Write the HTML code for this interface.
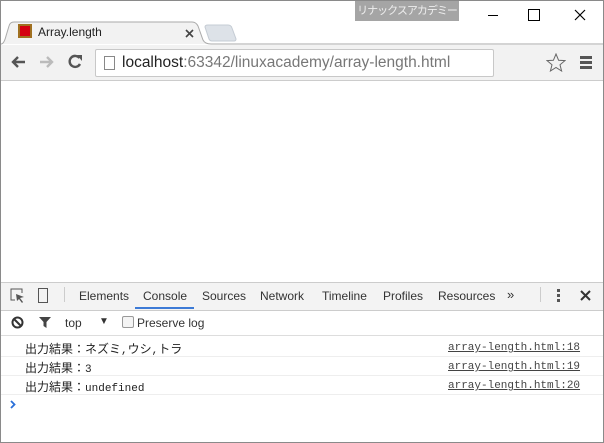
<!DOCTYPE html><html><head><style>
body{margin:0;width:604px;height:443px;overflow:hidden;background:#fff;font-family:"Liberation Sans","Noto Sans CJK JP",sans-serif;position:relative}
.a{position:absolute;white-space:nowrap}
</style></head><body>
<div class="a" style="left:0;top:0;width:602px;height:441px;border:1px solid #8a8a8a;"></div>
<div class="a" style="left:355px;top:1px;width:104px;height:20px;background:#a5a5a5;color:#eee;font-size:11px;line-height:20px;text-align:center;letter-spacing:-1px">リナックスアカデミー</div>
<div class="a" style="left:488px;top:15px;width:10px;height:1px;background:#000"></div>
<div class="a" style="left:528px;top:9px;width:10px;height:10px;border:1px solid #000"></div>
<svg class="a" style="left:574px;top:9px" width="12" height="12"><path d="M1 1L11 11M11 1L1 11" stroke="#000" stroke-width="1.2"/></svg>
<svg class="a" style="left:0;top:20px" width="604" height="26"><path d="M1 24 Q4 24 6 16 L9 6 Q10 2 14 2 L192 2 Q196 2 198 6 L203 20 Q205 24 211 24 L603 24" fill="#f2f2f2" stroke="#aaa"/><path d="M205 7 Q205 5 208 5 L228 5 Q231 5 232 8 L236 19 Q236 21 234 21 L212 21 Q210 21 209 19 Z" fill="#dde2e8" stroke="#c5ccd4"/></svg>
<div class="a" style="left:18px;top:24px;width:14px;height:14px;background:#d40010;border:2px solid #a07020;box-sizing:border-box"></div>
<div class="a" style="left:38px;top:25px;font-size:12px;color:#222">Array.length</div>
<svg class="a" style="left:185px;top:29px" width="9" height="9"><path d="M1 1L8 8M8 1L1 8" stroke="#444" stroke-width="1.6"/></svg>
<div class="a" style="left:1px;top:45px;width:602px;height:35px;background:#f2f2f2;border-bottom:1px solid #ccc"></div>
<svg class="a" style="left:10px;top:55px" width="16" height="14"><path d="M15 7H3M8 2L3 7L8 12" stroke="#555" stroke-width="2.4" fill="none"/></svg>
<svg class="a" style="left:39px;top:55px" width="16" height="14"><path d="M1 7H13M8 2L13 7L8 12" stroke="#bbb" stroke-width="2.4" fill="none"/></svg>
<svg class="a" style="left:68px;top:54px" width="16" height="16"><path d="M12 10A5.5 5.5 0 1 1 11.5 4" stroke="#555" stroke-width="2.4" fill="none"/><path d="M9 1L14 1L14 7Z" fill="#555"/></svg>
<div class="a" style="left:95px;top:49px;width:397px;height:26px;background:#fff;border:1px solid #c8c8c8;border-radius:2px"></div>
<div class="a" style="left:104px;top:56px;width:9px;height:12px;border:1px solid #888"></div>
<div class="a" style="left:122px;top:54px;font-size:15.5px;color:#777"><span style="color:#222">localhost</span>:63342/linuxacademy/array-length.html</div>
<svg class="a" style="left:546px;top:53px" width="20" height="19"><path d="M10 1L12.6 7.3L19 7.6L14 11.8L15.6 18L10 14.5L4.4 18L6 11.8L1 7.6L7.4 7.3Z" fill="none" stroke="#666"/></svg>
<div class="a" style="left:580px;top:56px;width:12px;height:3px;background:#555;box-shadow:0 5px #555,0 10px #555"></div>
<div class="a" style="left:1px;top:282px;width:602px;height:27px;background:#f3f3f3;border-top:1px solid #ccc;border-bottom:1px solid #ccc"></div>
<svg class="a" style="left:10px;top:288px" width="16" height="16"><path d="M5 12H1V1H12V5" stroke="#555" fill="none"/><path d="M6 6L14 9L10 10L13 14L12 15L9 11L7 13Z" fill="#555"/></svg>
<div class="a" style="left:38px;top:288px;width:8px;height:13px;border:1.5px solid #555"></div>
<div class="a" style="left:64px;top:287px;width:1px;height:15px;background:#ccc"></div>
<div class="a" style="left:79px;top:289px;font-size:12px;color:#333">Elements</div>
<div class="a" style="left:143px;top:289px;font-size:12px;color:#333">Console</div>
<div class="a" style="left:135px;top:307px;width:59px;height:2px;background:#3c7ad6"></div>
<div class="a" style="left:202px;top:289px;font-size:12px;color:#333">Sources</div>
<div class="a" style="left:260px;top:289px;font-size:12px;color:#333">Network</div>
<div class="a" style="left:322px;top:289px;font-size:12px;color:#333">Timeline</div>
<div class="a" style="left:383px;top:289px;font-size:12px;color:#333">Profiles</div>
<div class="a" style="left:438px;top:289px;font-size:12px;color:#333">Resources</div>
<div class="a" style="left:507px;top:287px;font-size:13px;color:#333">»</div>
<div class="a" style="left:540px;top:287px;width:1px;height:15px;background:#ccc"></div>
<div class="a" style="left:557px;top:289px;width:3px;height:3px;background:#555;box-shadow:0 5px #555,0 10px #555"></div>
<svg class="a" style="left:580px;top:290px" width="11" height="11"><path d="M1 1L10 10M10 1L1 10" stroke="#333" stroke-width="2"/></svg>
<div class="a" style="left:1px;top:310px;width:602px;height:25px;border-bottom:1px solid #ddd"></div>
<svg class="a" style="left:11px;top:316px" width="13" height="13"><circle cx="6.5" cy="6.5" r="5" stroke="#333" stroke-width="2" fill="none"/><path d="M3 3L10 10" stroke="#333" stroke-width="2"/></svg>
<svg class="a" style="left:38px;top:316px" width="14" height="13"><path d="M1 1H13L8.5 6V12L5.5 10V6Z" fill="#444"/></svg>
<div class="a" style="left:65px;top:316px;font-size:12px;color:#333">top</div>
<div class="a" style="left:99px;top:316px;font-size:10px;color:#333">▼</div>
<div class="a" style="left:122px;top:316px;width:10px;height:10px;border:1px solid #999;border-radius:2px;background:#f4f4f4"></div>
<div class="a" style="left:137px;top:316px;font-size:12px;color:#333">Preserve log</div>
<div class="a" style="left:1px;top:356px;width:602px;height:1px;background:#eee"></div>
<div class="a" style="left:1px;top:375px;width:602px;height:1px;background:#eee"></div>
<div class="a" style="left:1px;top:394px;width:602px;height:1px;background:#eee"></div>
<div class="a" style="left:25px;top:340px;font-size:12px;color:#222">出力結果：ネズミ<span style="font-family:'Liberation Mono',monospace;font-size:11px">,</span>ウシ<span style="font-family:'Liberation Mono',monospace;font-size:11px">,</span>トラ</div>
<div class="a" style="left:25px;top:359px;font-size:12px;color:#222">出力結果：<span style="font-family:'Liberation Mono',monospace;font-size:11px">3</span></div>
<div class="a" style="left:25px;top:378px;font-size:12px;color:#222">出力結果：<span style="font-family:'Liberation Mono',monospace;font-size:11px">undefined</span></div>
<div class="a" style="left:448px;top:342px;font-size:11px;font-family:'Liberation Mono',monospace;color:#444;text-decoration:underline">array-length.html:18</div>
<div class="a" style="left:448px;top:361px;font-size:11px;font-family:'Liberation Mono',monospace;color:#444;text-decoration:underline">array-length.html:19</div>
<div class="a" style="left:448px;top:380px;font-size:11px;font-family:'Liberation Mono',monospace;color:#444;text-decoration:underline">array-length.html:20</div>
<svg class="a" style="left:10px;top:400px" width="6" height="9"><path d="M1 1L4.5 4.5L1 8" stroke="#2a6fd8" stroke-width="1.8" fill="none"/></svg>
</body></html>
